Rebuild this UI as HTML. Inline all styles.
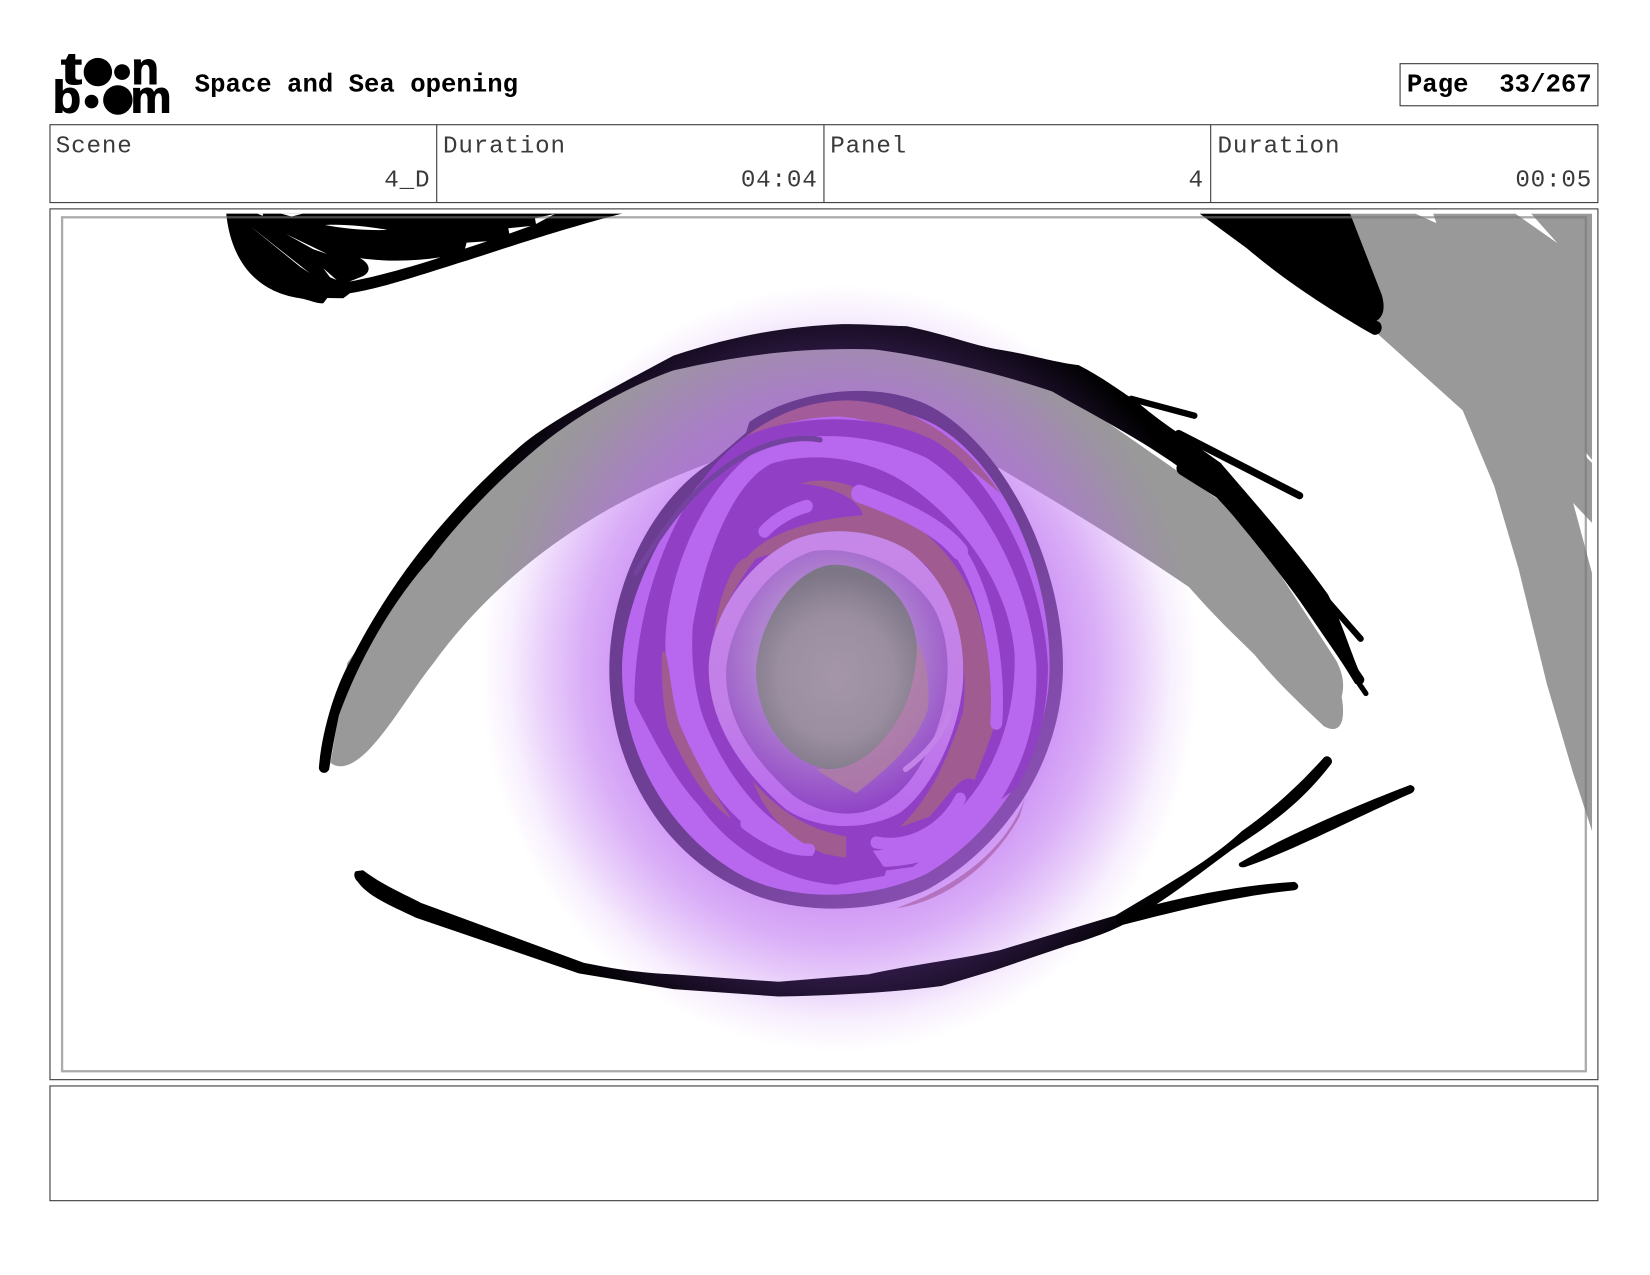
<!DOCTYPE html>
<html><head><meta charset="utf-8"><style>
html,body{margin:0;padding:0;background:#fff}
svg{display:block;position:absolute;left:0;top:0}
text{font-family:"Liberation Mono",monospace;font-size:23px;letter-spacing:.8px;fill:#3a3a3a}
.b{font-weight:bold;fill:#000;font-size:24.4px;letter-spacing:0}
.l{font-family:"Liberation Sans",sans-serif;font-weight:bold;font-size:43px;fill:#000;stroke:#000;stroke-width:1;letter-spacing:0}
</style></head><body>
<svg width="1650" height="1275" viewBox="0 0 1568 1211.640" xmlns="http://www.w3.org/2000/svg">
<defs>
<clipPath id="art"><rect x="52" y="203" width="1461" height="819"/></clipPath>
<radialGradient id="glow" gradientUnits="userSpaceOnUse" cx="0" cy="0" r="1" gradientTransform="translate(798,635) scale(342,365)">
<stop offset="0" stop-color="#b865f0" stop-opacity=".8"/>
<stop offset=".6" stop-color="#b865f0" stop-opacity=".68"/>
<stop offset=".72" stop-color="#b865f0" stop-opacity=".52"/>
<stop offset=".82" stop-color="#b865f0" stop-opacity=".32"/>
<stop offset=".92" stop-color="#b865f0" stop-opacity=".1"/>
<stop offset="1" stop-color="#b865f0" stop-opacity="0"/>
</radialGradient>
<radialGradient id="lid" gradientUnits="userSpaceOnUse" cx="795" cy="635" r="385">
<stop offset=".74" stop-color="#321b4a"/>
<stop offset=".97" stop-color="#000"/>
</radialGradient>
<radialGradient id="pup" gradientUnits="userSpaceOnUse" cx="770" cy="860" r="290">
<stop offset="0" stop-color="#a597a9"/><stop offset=".6" stop-color="#9a8ea0"/><stop offset="1" stop-color="#7d7686"/>
</radialGradient>
<radialGradient id="inner" gradientUnits="userSpaceOnUse" cx="760" cy="800" r="450">
<stop offset=".5" stop-color="#b083d0"/><stop offset="1" stop-color="#8f42c6"/>
</radialGradient>
<linearGradient id="lr" gradientUnits="userSpaceOnUse" x1="0" y1="450" x2="0" y2="1290">
<stop offset="0" stop-color="#c688e8"/><stop offset=".6" stop-color="#c27fe8"/><stop offset="1" stop-color="#b868ee"/>
</linearGradient>
<linearGradient id="outer" gradientUnits="userSpaceOnUse" x1="200" y1="300" x2="1300" y2="1400">
<stop offset="0" stop-color="#6a3c90"/><stop offset=".55" stop-color="#6f4095"/><stop offset="1" stop-color="#8e52b8"/>
</linearGradient>
</defs>

<!-- artwork -->
<g clip-path="url(#art)">
<path fill="#999" d="M1283,203 L1345,203 L1365,212 L1362,203 L1440,203 L1480,231 L1455,203 L1513,203 L1513,437 L1507,430 L1507,434 L1513,440 L1513,497 L1495,478 L1513,545 L1513,790 L1495,735 L1470,650 L1443,540 L1420,462 L1390,390 L1310,318 Z"/>
<path fill="#000" d="M1140,203 L1185,236 C1225,270 1270,298 1305,318 C1314,320 1316,306 1308,305 C1316,300 1316,290 1313,280 L1283,203 Z"/>

<g transform="translate(190,190) scale(.3168)">
<path fill="#000" d="M78,30 C85,130 130,270 300,295 C330,300 350,312 370,310 L382,294 L430,295 L450,280 C560,262 700,212 800,182 C900,150 1100,82 1290,35 Z"/>
<path fill="#fff" d="M150,78 L330,220 L300,200 Z M258,102 L382,162 L340,148 Z M375,75 C440,72 510,80 562,90 C500,92 430,86 375,75 Z M370,205 L410,240 L390,232 Z M480,175 C510,190 515,215 490,228 L448,245 C520,232 640,200 722,172 C640,185 560,185 480,175 Z M795,146 L862,124 L800,128 Z M925,85 L992,78 L928,101 Z M1005,55 L1065,42 L1008,72 Z M170,40 L188,48 L190,40 Z M240,40 L275,50 L312,40 Z"/>
</g>

<path fill="#999" d="M314,725 C325,733 338,725 350,713 C372,690 392,655 412,630 C470,550 560,480 680,438 L950,445 C1000,475 1060,510 1130,558 C1160,592 1175,605 1192,622 C1215,650 1235,668 1258,690 C1270,697 1280,692 1275,662 C1278,650 1276,640 1270,628 L1180,490 L1000,365 L830,325 L640,345 L520,410 L410,520 L330,630 Z"/>
<ellipse cx="798" cy="635" rx="342" ry="365" fill="url(#glow)"/>

<path fill="url(#lid)" d="M303,730 C306,692 320,650 333,628 C370,555 420,490 490,428 C520,400 590,365 640,338 C700,318 750,310 800,308 C830,308 850,310 862,310 C900,318 925,328 948,332 C975,336 1005,345 1025,347 C1050,360 1065,372 1075,378 C1085,385 1095,395 1125,415 L1160,440 C1190,475 1230,520 1262,565 C1275,590 1285,625 1296,648 L1288,650 C1270,620 1230,560 1180,500 C1160,475 1140,455 1122,445 C1080,415 1040,395 1000,372 C950,355 880,338 830,332 C760,330 700,338 640,352 C590,370 550,395 520,418 C480,450 440,490 410,530 C370,575 340,630 322,680 C318,700 315,715 313,730 C312,736 304,736 303,730Z"/>
<g fill="none" stroke="#000" stroke-linecap="round">
<path stroke-width="6" d="M1075,379 L1135,395"/>
<path stroke-width="7" d="M1120,412 L1235,471"/>
<path stroke-width="14" d="M1125,445 L1165,470"/>
<path stroke-width="6" d="M1250,558 L1293,607"/>
<path stroke-width="9" d="M1240,570 L1292,646"/>
<path stroke-width="5" d="M1285,640 L1298,659"/>
</g>
<path fill="url(#lid)" d="M338,828 L345,827 C365,842 385,850 400,858 L555,915 C590,922 615,925 640,926 L740,933 L825,926 C870,916 910,912 950,903 L1060,870 C1110,840 1150,818 1180,790 C1215,765 1240,740 1258,720 C1262,716 1268,722 1265,726 C1235,765 1205,785 1170,808 C1140,830 1105,858 1065,880 C1040,892 1015,898 1010,900 L945,922 L895,937 C840,944 790,946 740,947 L640,940 L550,925 L395,872 C370,860 350,852 340,838 C336,834 336,830 338,828Z"/>
<path fill="#000" d="M1060,870 C1110,855 1170,842 1230,838 C1235,840 1235,845 1230,846 C1170,852 1110,868 1063,880Z"/>
<path fill="#000" d="M1178,820 C1220,795 1290,765 1340,746 C1346,747 1345,752 1341,754 C1290,776 1230,808 1183,824 C1178,825 1176,822 1178,820Z"/>

<!-- iris -->
<g transform="matrix(.317,0,0,.341,550.5,349.8)">
<path fill="#a65ea8" opacity=".7" d="M1345,1170 C1310,1300 1180,1430 950,1505 C1080,1490 1230,1400 1320,1250 Z"/>
<path fill="url(#outer)" d="M510,150 C650,60 900,30 1060,110 C1290,230 1450,560 1450,830 C1450,1090 1280,1330 1050,1450 C900,1520 650,1530 480,1450 C250,1350 90,1110 90,840 C90,620 210,370 400,260 L500,180 Z"/>
<path fill="#b868ee" d="M450,240 C620,110 900,70 1070,160 C1270,270 1410,560 1410,830 C1410,1060 1260,1290 1040,1410 C880,1480 660,1490 500,1420 C290,1320 128,1090 128,840 C128,640 270,380 450,240Z"/>
<path fill="#a35b99" d="M440,238 C520,165 640,92 800,90 C1000,92 1170,215 1262,350 C1130,240 960,150 780,135 C650,135 530,175 440,238Z"/>
<path fill="#9140c6" d="M500,190 C650,125 900,125 1060,200 C1230,290 1390,560 1405,830 C1405,1000 1350,1110 1310,1170 L1000,1390 L920,1400 L915,1415 L770,1440 C620,1430 460,1350 360,1220 C280,1140 220,1030 165,930 C165,640 300,320 500,190Z"/>
<path fill="#b868ee" d="M540,225 C680,170 880,180 1040,250 C1200,340 1350,590 1370,830 C1375,1000 1330,1130 1200,1290 C1100,1370 1000,1385 920,1390 L700,1360 C560,1340 430,1250 340,1080 C280,980 258,880 258,760 C265,560 380,320 540,225Z"/>
<path fill="#9140c6" d="M580,265 C690,235 840,245 960,310 C1120,400 1290,590 1305,800 C1310,1000 1220,1180 1090,1270 C1040,1320 960,1340 880,1345 L920,1400 L780,1435 L700,1360 L680,1310 C540,1270 420,1100 370,970 C340,880 335,790 340,720 C380,500 470,310 580,265Z"/>
<path fill="#a05c90" d="M665,322 C720,305 800,315 850,345 C960,400 1100,480 1170,620 C1220,720 1245,880 1240,1010 C1210,1090 1190,1130 1185,1150 C1150,1120 1100,1200 1050,1250 L960,1280 C1050,1200 1100,1100 1150,960 C1170,820 1130,650 1040,550 C950,470 800,440 640,500 L530,530 C480,590 430,670 405,740 C420,620 470,530 500,530 C560,460 700,420 850,410 C840,370 770,330 665,322Z"/>
<path fill="#a05c90" d="M248,790 C270,780 270,900 300,990 C340,1080 400,1180 455,1255 C380,1210 310,1100 265,1000 C250,930 245,860 248,790Z"/>
<path fill="#a05c90" d="M520,1150 C600,1240 700,1290 800,1305 L800,1365 L740,1355 C640,1320 560,1250 520,1150Z"/>
<path fill="none" stroke="#b868ee" stroke-width="50" stroke-linecap="round" d="M840,350 C960,390 1080,440 1140,510"/>
<path fill="none" stroke="#b868ee" stroke-width="36" stroke-linecap="round" d="M1130,500 C1200,580 1265,780 1250,990"/>
<path fill="none" stroke="#b868ee" stroke-width="36" stroke-linecap="round" d="M555,455 C590,420 640,395 682,385"/>
<path fill="none" stroke="#b868ee" stroke-width="34" stroke-linecap="round" d="M890,1322 C990,1340 1090,1290 1142,1200"/>
<path fill="none" stroke="#b868ee" stroke-width="34" stroke-linecap="round" d="M690,1342 C640,1345 570,1320 500,1270"/>
<path fill="url(#lr)" d="M640,480 C740,440 880,445 990,510 C1100,590 1160,720 1150,880 C1135,1030 1050,1180 960,1240 C860,1290 720,1290 620,1230 C480,1120 385,980 388,830 C395,680 510,540 640,480Z"/>
<path fill="url(#inner)" d="M700,510 C820,495 960,540 1050,650 C1110,730 1115,850 1090,950 C1060,1060 1000,1170 910,1215 C830,1260 720,1245 640,1190 C520,1090 440,980 440,850 C445,710 560,550 700,510Z"/>
<path fill="#b0829e" opacity=".75" d="M1010,760 C1040,800 1052,880 1045,950 C1010,1050 920,1120 830,1185 L780,1160 L710,1118 C800,1110 900,1050 960,960 Z"/>
<path fill="none" stroke="#c483e8" stroke-width="16" stroke-linecap="round" d="M978,1118 C1040,1075 1090,1020 1110,960"/>
<path fill="url(#pup)" d="M760,548 C880,545 1005,640 1012,780 C1010,880 970,960 960,970 C900,1070 820,1118 745,1118 C640,1105 535,1000 530,850 C530,720 640,555 760,548Z"/>
<path fill="none" stroke="#74439f" stroke-width="15" stroke-linecap="round" d="M722,200 C640,185 520,215 420,290 C330,350 260,440 170,570"/>
</g>
</g>

<!-- storyboard frame -->
<rect x="59" y="206.500" width="1448" height="811.500" fill="none" stroke="#777" stroke-opacity=".62" stroke-width="2.200"/>

<!-- page boxes -->
<g fill="none" stroke="#444" stroke-width="1.100">
<rect x="47.500" y="118.500" width="1471" height="74"/>
<path d="M415,118.500V192.500M783,118.500V192.500M1150.500,118.500V192.500"/>
<rect x="47.500" y="198.500" width="1471" height="827.500"/>
<rect x="47.500" y="1032" width="1471" height="109"/>
<rect x="1330.500" y="60.500" width="188" height="40"/>
</g>

<!-- logo -->
<text class="l" x="58" y="80" textLength="20" lengthAdjust="spacingAndGlyphs">t</text>
<circle cx="93" cy="68.500" r="13.500"/>
<circle cx="116" cy="68.500" r="7.500"/>
<text class="l" x="125" y="80" textLength="26" lengthAdjust="spacingAndGlyphs">n</text>
<text class="l" x="50" y="107" textLength="27" lengthAdjust="spacingAndGlyphs">b</text>
<circle cx="87" cy="96.500" r="6.500"/>
<circle cx="112" cy="95" r="14"/>
<text class="l" x="124" y="107" textLength="39" lengthAdjust="spacingAndGlyphs">m</text>

<!-- text -->
<text class="b" x="185" y="87">Space and Sea opening</text>
<text class="b" x="1337" y="87" xml:space="preserve">Page  33/267</text>
<text x="53" y="145">Scene</text>
<text x="421" y="145">Duration</text>
<text x="789" y="145">Panel</text>
<text x="1157" y="145">Duration</text>
<text x="409" y="177" text-anchor="end">4_D</text>
<text x="777" y="177" text-anchor="end">04:04</text>
<text x="1144" y="177" text-anchor="end">4</text>
<text x="1513" y="177" text-anchor="end">00:05</text>
</svg>
</body></html>
